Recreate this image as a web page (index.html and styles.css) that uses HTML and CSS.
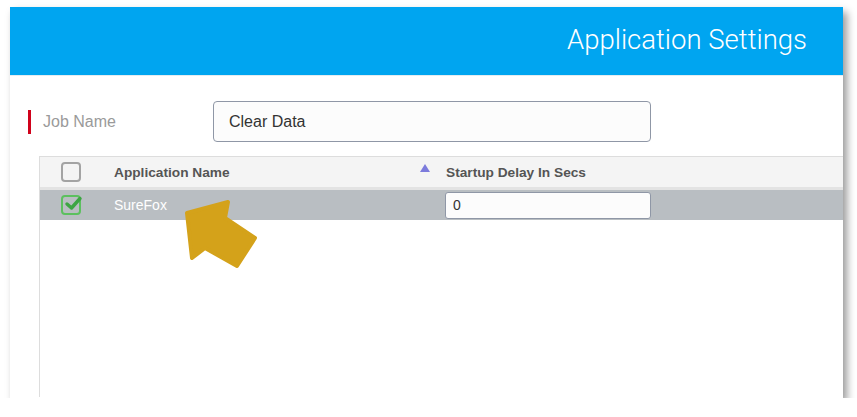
FILE: index.html
```html
<!DOCTYPE html>
<html lang="en">
<head>
    <meta charset="UTF-8">
    <meta name="viewport" content="width=device-width, initial-scale=1.0">
    <title>Application Settings</title>
    <link rel="stylesheet" href="styles.css">
</head>
<body>

<div class="card">
    <header>
        <div class="title">Application Settings</div>
    </header>

    <div class="job-row">
        <label class="job-label">Job Name</label>
        <input type="text" class="job-input" value="Clear Data">
    </div>

    <div class="app-table">
        <div class="table-head">
            <div class="cell cell-check"><span class="check"></span></div>
            <div class="cell cell-name">Application Name <span class="sort-up"></span></div>
            <div class="cell cell-delay">Startup Delay In Secs</div>
        </div>
        <div class="table-row selected">
            <div class="cell cell-check">
                <span class="check checked">
                    <svg width="20" height="20" viewBox="0 0 20 20">
                        <path d="M4 10 L8.5 14 L17 4.5" fill="none" stroke="#3da543" stroke-width="3.4" stroke-linecap="round" stroke-linejoin="round"/>
                    </svg>
                </span>
            </div>
            <div class="cell cell-name">SureFox</div>
            <div class="cell cell-delay"><input type="text" class="delay-input" value="0"></div>
        </div>
    </div>

    <!-- pointer arrow -->
    <svg class="pointer" width="90" height="80" viewBox="175 195 90 80">
        <polygon points="187,213 228,202 225,218 255,238 237,266 205,248 192,258" fill="#d4a21a" stroke="#d4a21a" stroke-width="4" stroke-linejoin="round"/>
    </svg>
</div>

</body>
</html>
```

FILE: styles.css
```css
body {
    margin: 0;
    padding: 0;
    background: white;
    font-family: "Liberation Sans", Arial, sans-serif;
}
.card {
    position: relative;
    margin: 7px 0 0 10px;
    width: 833px;
    height: 391px;
    background: white;
    box-shadow: 4px 5px 8px rgba(0, 0, 0, 0.4);
    overflow: hidden;
}
header {
    height: 68px;
    background-color: #00a5f0;
    border-bottom: 1px solid #e4ecf1;
    display: flex;
    justify-content: flex-end;
    align-items: center;
    padding-right: 36px;
}
header .title {
    font-family: Roboto, sans-serif;
    font-weight: 300;
    font-size: 27.5px;
    color: white;
    margin-top: -4px;
}
.job-row {
    display: flex;
    align-items: center;
    margin-top: 25px;
    padding-left: 18px;
}
.job-label {
    border-left: 3px solid #d0021b;
    height: 24px;
    line-height: 24px;
    padding-left: 12px;
    width: 170px;
    color: #9a9a9a;
    font-size: 16px;
}
.job-input {
    width: 438px;
    height: 41px;
    box-sizing: border-box;
    border: 1px solid #8f97a6;
    border-radius: 4px;
    background: #fcfcfc;
    padding: 0 15px;
    font-family: "Liberation Sans", Arial, sans-serif;
    font-size: 16px;
    color: #333;
}
.app-table {
    margin: 14px 0 0 29px;
    height: 240px;
    border-left: 1px solid #dddddd;
    border-top: 1px solid #dddddd;
}
.table-head, .table-row {
    display: grid;
    grid-template-columns: 74px 332px 1fr;
    align-items: center;
}
.table-head {
    height: 30px;
    background: #f4f4f4;
    border-bottom: 3px solid #e3e3e3;
    font-weight: bold;
    font-size: 13.7px;
    color: #555;
}
.table-row {
    height: 30px;
    font-size: 14px;
}
.table-row.selected {
    background: #b9bec2;
    color: white;
}
.cell-check {
    padding-left: 21px;
    display: flex;
}
.check {
    display: inline-block;
    width: 20px;
    height: 20px;
    box-sizing: border-box;
    border: 2px solid #a3a3a3;
    border-radius: 4px;
    position: relative;
}
.check.checked {
    border-color: #5cc05f;
}
.check svg {
    position: absolute;
    left: 0;
    top: -3px;
}
.cell-name {
    position: relative;
}
.sort-up {
    position: absolute;
    left: 306px;
    top: -1px;
    width: 0;
    height: 0;
    border-left: 5px solid transparent;
    border-right: 5px solid transparent;
    border-bottom: 8px solid #7c7bdc;
}
.delay-input {
    margin-left: -1px;
    width: 206px;
    height: 27px;
    box-sizing: border-box;
    border: 1px solid #8f97a6;
    border-radius: 3px;
    background: #fcfcfc;
    padding: 0 7px;
    font-family: "Liberation Sans", Arial, sans-serif;
    font-size: 14px;
    color: #333;
}
.pointer {
    position: absolute;
    left: 165px;
    top: 188px;
}
```
